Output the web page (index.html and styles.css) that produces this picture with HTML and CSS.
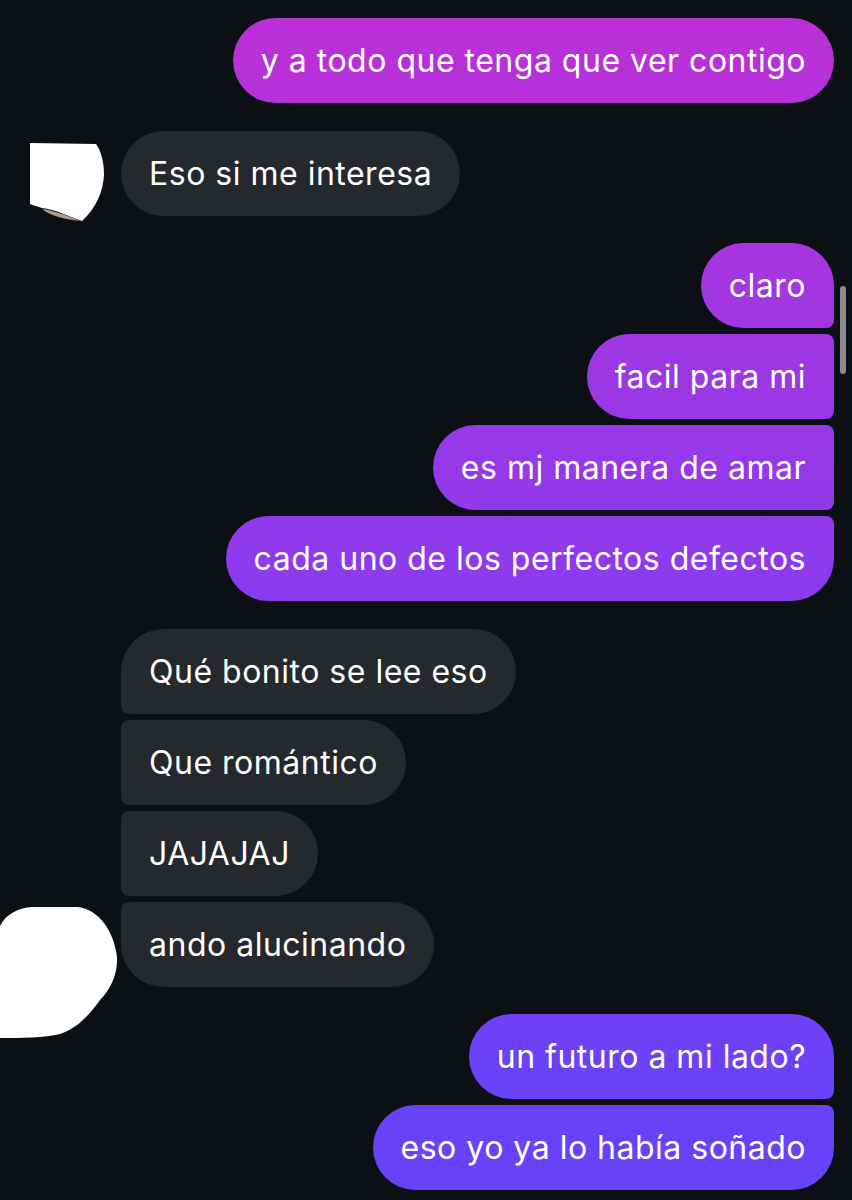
FILE: index.html
```html
<!DOCTYPE html>
<html lang="es">
<head>
  <meta charset="UTF-8">
  <meta name="viewport" content="width=device-width, initial-scale=1.0">
  <title>Mensajes</title>
  <link rel="stylesheet" href="styles.css">
</head>
<body>
  <div class="chat">
    <!-- enviados -->
    <div class="group out">
      <div class="row"><div class="bubble">y a todo que tenga que ver contigo</div></div>
    </div>

    <div class="group in">
      <div class="row">
        <div class="avatar">
          <svg width="121" height="85" viewBox="0 0 121 85">
            <path d="M30 12 L96 13 C101 20 104 30 104 44 C103 60 97 76 82 90 C70 86 55 78 42 77 C38 76 33 74 30 73 Z" fill="#fff"/>
            <path d="M42 78 C52 79 66 84 80 90 C66 88 52 86 42 78 Z" fill="#b89a8a"/>
          </svg>
        </div>
        <div class="bubble">Eso si me interesa</div>
      </div>
    </div>

    <div class="group out">
      <div class="row"><div class="bubble">claro</div></div>
      <div class="row"><div class="bubble">facil para mi</div></div>
      <div class="row"><div class="bubble">es mj manera de amar</div></div>
      <div class="row"><div class="bubble">cada uno de los perfectos defectos</div></div>
    </div>

    <div class="group in">
      <div class="row"><div class="avatar"></div><div class="bubble">Qué bonito se lee eso</div></div>
      <div class="row"><div class="avatar"></div><div class="bubble">Que romántico</div></div>
      <div class="row"><div class="avatar"></div><div class="bubble">JAJAJAJ</div></div>
      <div class="row">
        <div class="avatar">
          <svg width="121" height="85" viewBox="0 0 121 85">
            <path d="M0 24 C6 12 18 6 32 5 L78 5 C100 8 114 30 117 55 C118 72 110 88 100 98 C90 112 78 126 60 132 C45 136 20 136 0 136 Z" fill="#fff"/>
          </svg>
        </div>
        <div class="bubble">ando alucinando</div>
      </div>
    </div>

    <div class="group out">
      <div class="row"><div class="bubble">un futuro a mi lado?</div></div>
      <div class="row"><div class="bubble">eso yo ya lo había soñado</div></div>
    </div>
  </div>
  <div class="scrollbar"></div>
</body>
</html>
```

FILE: styles.css
```css
html, body { margin:0; background:#0c1014; height:100%; overflow:hidden; }
body { font-family:Inter,"Noto Sans",sans-serif; color:#fff; }
.chat { padding:18px 18px 0 0; display:flex; flex-direction:column; gap:27.5px; }
.group { display:flex; flex-direction:column; gap:6px; }
.row { display:flex; }
.out .row { justify-content:flex-end; }
.avatar { width:121px; flex:none; height:85px; }
.avatar svg { display:block; overflow:visible; }

.bubble { height:85px; box-sizing:border-box; padding:0 28px; display:flex; align-items:center; font-size:32px; letter-spacing:0.5px; border-radius:42.5px; white-space:nowrap; }
.in .bubble { background:#25292d; }
.out .bubble { background:linear-gradient(180deg,#bd2fd6 0px,#a336e1 300px,#8a3bee 600px,#6c41f7 1060px,#6543f9 1200px) fixed; }

/* esquinas de grupo */
.out .row:first-child:not(:last-child) .bubble { border-bottom-right-radius:8px; }
.out .row:not(:first-child):not(:last-child) .bubble { border-top-right-radius:8px; border-bottom-right-radius:8px; }
.out .row:last-child:not(:first-child) .bubble { border-top-right-radius:8px; }
.in .row:first-child:not(:last-child) .bubble { border-bottom-left-radius:8px; }
.in .row:not(:first-child):not(:last-child) .bubble { border-top-left-radius:8px; border-bottom-left-radius:8px; }
.in .row:last-child:not(:first-child) .bubble { border-top-left-radius:8px; }

.scrollbar { position:absolute; left:840px; top:286px; width:6px; height:88px; border-radius:3px; background:#8b8b8d; }
```
